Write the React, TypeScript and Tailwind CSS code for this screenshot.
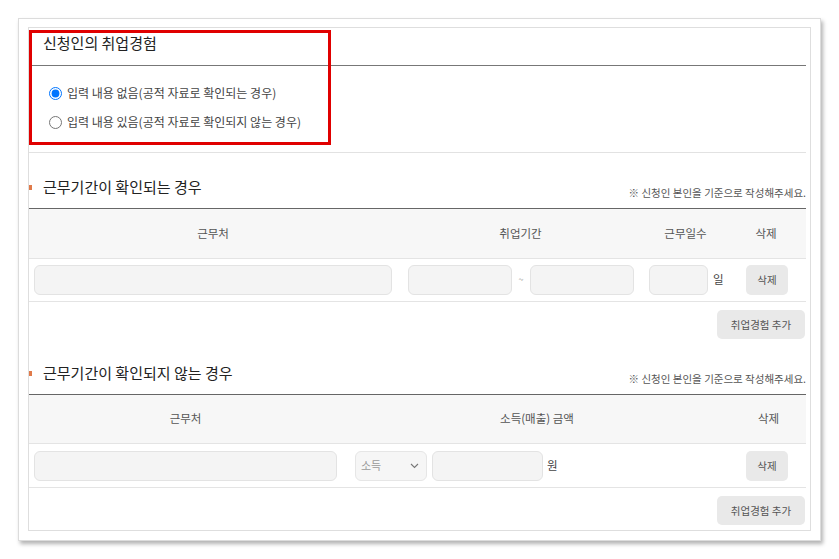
import React from "react";

const font = { fontFamily: '"Noto Sans CJK KR", "Noto Sans", sans-serif' };

function Marker() {
  return <span className="block w-[3px] h-[5px] bg-[#e07a4a]" />;
}

function SectionHead({ title, note }: { title: string; note?: string }) {
  return (
    <div className="h-[55px] flex items-end justify-between pb-[10px]">
      <div className="flex items-center">
        <Marker />
        <span className="ml-[11px] text-[15px] leading-[22px] text-[#222]">{title}</span>
      </div>
      {note && (
        <span className="text-[10.5px] leading-[14px] mb-[-2px] text-[#555]">{note}</span>
      )}
    </div>
  );
}

function Input({ w }: { w: string }) {
  return <div className={`${w} h-[30px] rounded-[6px] bg-[#f4f4f4] border border-[#e3e3e3]`} />;
}

function SmallBtn({ children, w }: { children: React.ReactNode; w: string }) {
  return (
    <div className={`${w} flex items-center justify-center rounded-[5px] bg-[#e9e9e9] text-[10.5px] text-[#555]`}>
      {children}
    </div>
  );
}

export default function App() {
  return (
    <div className="relative w-[839px] h-[559px] bg-white pt-[18px] pl-[18px]" style={font}>
      <div className="w-[803px] h-[523px] border border-[#dcdcdc] bg-white shadow-[2px_3px_4px_rgba(0,0,0,0.3)] pt-[8px] pl-[9px] pr-[9px] pb-[9px]">
        <div className="w-[783px] h-[504px] border border-[#dedede] pr-[4px]">
          {/* Section 1 */}
          <div className="h-[38px] border-b border-[#777] pt-[4px]">
            <div className="flex items-center h-[22px]">
              <Marker />
              <span className="ml-[11px] text-[15px] leading-[22px] text-[#222]">신청인의 취업경험</span>
            </div>
          </div>
          <div className="border-b border-[#e2e2e2] pt-[17px] pb-[20px] pl-[20px] flex flex-col gap-[9px]">
            <label className="flex items-center h-[20px]">
              <input type="radio" name="exp" defaultChecked className="w-[13px] h-[13px] m-0" />
              <span className="ml-[5px] text-[12px] text-[#444]">입력 내용 없음(공적 자료로 확인되는 경우)</span>
            </label>
            <label className="flex items-center h-[20px]">
              <input type="radio" name="exp" className="w-[13px] h-[13px] m-0" />
              <span className="ml-[5px] text-[12px] text-[#444]">입력 내용 있음(공적 자료로 확인되지 않는 경우)</span>
            </label>
          </div>

          {/* Section 2 */}
          <SectionHead title="근무기간이 확인되는 경우" note="※ 신청인 본인을 기준으로 작성해주세요." />
          <div className="border-t border-[#666]">
            <div className="grid grid-cols-[368px_247px_83px_78px] h-[50px] bg-[#f7f7f7] border-b border-[#e4e4e4] items-center text-[11.5px] text-[#555]">
              <div className="text-center">근무처</div>
              <div className="text-center">취업기간</div>
              <div className="text-center">근무일수</div>
              <div className="text-center">삭제</div>
            </div>
            <div className="grid grid-cols-[368px_247px_83px_78px] h-[43px] border-b border-[#e4e4e4] items-center">
              <div className="px-[5px]"><Input w="w-full" /></div>
              <div className="pl-[11px] flex items-center">
                <Input w="w-[104px]" />
                <span className="w-[18px] text-center text-[9px] text-[#999]">~</span>
                <Input w="w-[104px]" />
              </div>
              <div className="pl-[5px] flex items-center">
                <Input w="w-[59px]" />
                <span className="ml-[5px] text-[11.5px] text-[#444]">일</span>
              </div>
              <div className="flex justify-center pl-[2px]">
                <SmallBtn w="w-[42px] h-[30px]">삭제</SmallBtn>
              </div>
            </div>
            <div className="flex justify-end pt-[8px] pr-[1px]">
              <SmallBtn w="w-[88px] h-[29px]">취업경험 추가</SmallBtn>
            </div>
          </div>

          {/* Section 3 */}
          <SectionHead title="근무기간이 확인되지 않는 경우" note="※ 신청인 본인을 기준으로 작성해주세요." />
          <div className="border-t border-[#666]">
            <div className="grid grid-cols-[313px_390px_73px] h-[49px] bg-[#f7f7f7] border-b border-[#e4e4e4] items-center text-[11.5px] text-[#555]">
              <div className="text-center">근무처</div>
              <div className="text-center">소득(매출) 금액</div>
              <div className="text-center">삭제</div>
            </div>
            <div className="grid grid-cols-[313px_390px_73px] h-[44px] border-b border-[#e4e4e4] items-center">
              <div className="px-[5px]"><Input w="w-full" /></div>
              <div className="pl-[13px] flex items-center">
                <div className="w-[72px] h-[30px] rounded-[6px] bg-[#f6f6f6] border border-[#e6e6e6] flex items-center justify-between pl-[5px] pr-[7px]">
                  <span className="text-[11px] text-[#999]">소득</span>
                  <svg width="9" height="6" viewBox="0 0 9 6" fill="none">
                    <path d="M1 1l3.5 3.5L8 1" stroke="#777" strokeWidth="1.1" />
                  </svg>
                </div>
                <div className="ml-[5px]"><Input w="w-[111px]" /></div>
                <span className="ml-[4px] text-[11.5px] text-[#444]">원</span>
              </div>
              <div className="flex justify-center pr-[3px]">
                <SmallBtn w="w-[42px] h-[30px]">삭제</SmallBtn>
              </div>
            </div>
            <div className="flex justify-end pt-[8px] pr-[1px]">
              <SmallBtn w="w-[88px] h-[29px]">취업경험 추가</SmallBtn>
            </div>
          </div>
        </div>
      </div>

      {/* Red annotation box */}
      <div className="absolute left-[29px] top-[30px] w-[302px] h-[115px] border-[3px] border-[#e00000]" />
    </div>
  );
}
